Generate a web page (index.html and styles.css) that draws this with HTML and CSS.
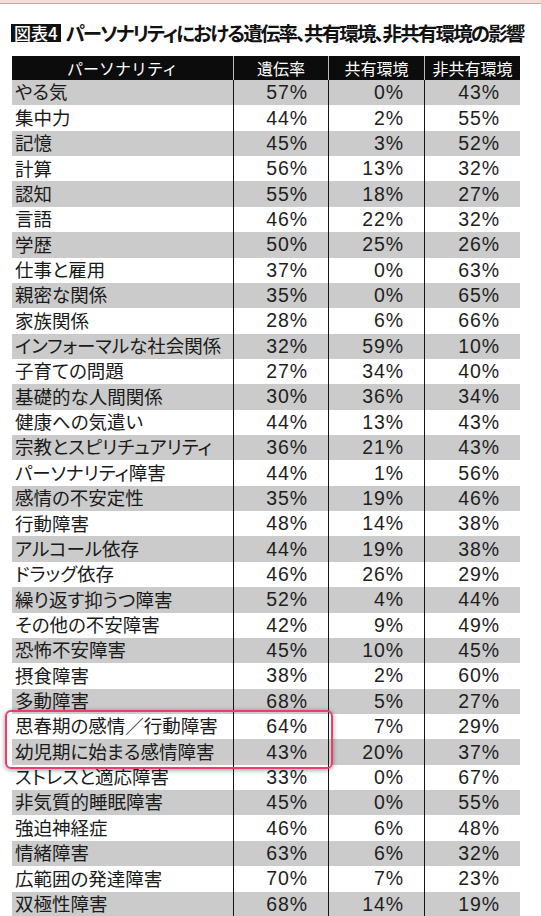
FILE: index.html
```html
<!DOCTYPE html>
<html lang="ja">
<head>
<meta charset="utf-8">
<title>図表4</title>
<link rel="stylesheet" href="styles.css">
</head>
<body>
<div class="topbar"></div>
<h1 class="title"><span class="badge">図表4</span><span class="title-text">パーソナリティにおける遺伝率、共有環境、非共有環境の影響</span></h1>
<div class="table">
  <div class="head">
    <div class="hc">パーソナリティ</div>
    <div class="hc">遺伝率</div>
    <div class="hc">共有環境</div>
    <div class="hc">非共有環境</div>
  </div>
  <div class="body">
    <div class="row"><div class="lab">やる気</div><div class="num">57%</div><div class="num">0%</div><div class="num">43%</div></div>
    <div class="row"><div class="lab">集中力</div><div class="num">44%</div><div class="num">2%</div><div class="num">55%</div></div>
    <div class="row"><div class="lab">記憶</div><div class="num">45%</div><div class="num">3%</div><div class="num">52%</div></div>
    <div class="row"><div class="lab">計算</div><div class="num">56%</div><div class="num">13%</div><div class="num">32%</div></div>
    <div class="row"><div class="lab">認知</div><div class="num">55%</div><div class="num">18%</div><div class="num">27%</div></div>
    <div class="row"><div class="lab">言語</div><div class="num">46%</div><div class="num">22%</div><div class="num">32%</div></div>
    <div class="row"><div class="lab">学歴</div><div class="num">50%</div><div class="num">25%</div><div class="num">26%</div></div>
    <div class="row"><div class="lab">仕事と雇用</div><div class="num">37%</div><div class="num">0%</div><div class="num">63%</div></div>
    <div class="row"><div class="lab">親密な関係</div><div class="num">35%</div><div class="num">0%</div><div class="num">65%</div></div>
    <div class="row"><div class="lab">家族関係</div><div class="num">28%</div><div class="num">6%</div><div class="num">66%</div></div>
    <div class="row"><div class="lab">インフォーマルな社会関係</div><div class="num">32%</div><div class="num">59%</div><div class="num">10%</div></div>
    <div class="row"><div class="lab">子育ての問題</div><div class="num">27%</div><div class="num">34%</div><div class="num">40%</div></div>
    <div class="row"><div class="lab">基礎的な人間関係</div><div class="num">30%</div><div class="num">36%</div><div class="num">34%</div></div>
    <div class="row"><div class="lab">健康への気遣い</div><div class="num">44%</div><div class="num">13%</div><div class="num">43%</div></div>
    <div class="row"><div class="lab">宗教とスピリチュアリティ</div><div class="num">36%</div><div class="num">21%</div><div class="num">43%</div></div>
    <div class="row"><div class="lab">パーソナリティ障害</div><div class="num">44%</div><div class="num">1%</div><div class="num">56%</div></div>
    <div class="row"><div class="lab">感情の不安定性</div><div class="num">35%</div><div class="num">19%</div><div class="num">46%</div></div>
    <div class="row"><div class="lab">行動障害</div><div class="num">48%</div><div class="num">14%</div><div class="num">38%</div></div>
    <div class="row"><div class="lab">アルコール依存</div><div class="num">44%</div><div class="num">19%</div><div class="num">38%</div></div>
    <div class="row"><div class="lab">ドラッグ依存</div><div class="num">46%</div><div class="num">26%</div><div class="num">29%</div></div>
    <div class="row"><div class="lab">繰り返す抑うつ障害</div><div class="num">52%</div><div class="num">4%</div><div class="num">44%</div></div>
    <div class="row"><div class="lab">その他の不安障害</div><div class="num">42%</div><div class="num">9%</div><div class="num">49%</div></div>
    <div class="row"><div class="lab">恐怖不安障害</div><div class="num">45%</div><div class="num">10%</div><div class="num">45%</div></div>
    <div class="row"><div class="lab">摂食障害</div><div class="num">38%</div><div class="num">2%</div><div class="num">60%</div></div>
    <div class="row"><div class="lab">多動障害</div><div class="num">68%</div><div class="num">5%</div><div class="num">27%</div></div>
    <div class="row"><div class="lab">思春期の感情／行動障害</div><div class="num">64%</div><div class="num">7%</div><div class="num">29%</div></div>
    <div class="row"><div class="lab">幼児期に始まる感情障害</div><div class="num">43%</div><div class="num">20%</div><div class="num">37%</div></div>
    <div class="row"><div class="lab">ストレスと適応障害</div><div class="num">33%</div><div class="num">0%</div><div class="num">67%</div></div>
    <div class="row"><div class="lab">非気質的睡眠障害</div><div class="num">45%</div><div class="num">0%</div><div class="num">55%</div></div>
    <div class="row"><div class="lab">強迫神経症</div><div class="num">46%</div><div class="num">6%</div><div class="num">48%</div></div>
    <div class="row"><div class="lab">情緒障害</div><div class="num">63%</div><div class="num">6%</div><div class="num">32%</div></div>
    <div class="row"><div class="lab">広範囲の発達障害</div><div class="num">70%</div><div class="num">7%</div><div class="num">23%</div></div>
    <div class="row"><div class="lab">双極性障害</div><div class="num">68%</div><div class="num">14%</div><div class="num">19%</div></div>
  </div>
  <div class="highlight"></div>
</div>
</body>
</html>
```
FILE: styles.css
```css
html, body {
  margin: 0;
  padding: 0;
  background: #ffffff;
}
body {
  width: 541px;
  height: 916px;
  overflow: hidden;
  font-family: "Noto Sans CJK JP", "Noto Sans", sans-serif;
  color: #1c1c1c;
}
.topbar {
  height: 3px;
  background: #f4dcd8;
  border-bottom: 1px solid #c4aaa6;
}
.title {
  margin: 18px 0 0 11px;
  height: 22px;
  display: flex;
  align-items: center;
  gap: 5px;
  font-weight: 700;
  line-height: 1;
  white-space: nowrap;
}
.badge {
  background: #111;
  color: #fff;
  font-size: 17px;
  font-weight: 500;
  height: 18px;
  line-height: 18px;
  padding: 0 3px;
  font-feature-settings: "palt";
}
.title-text {
  font-size: 19.5px;
  letter-spacing: -1.85px;
  font-feature-settings: "palt";
  color: #111;
}
.table {
  position: relative;
  margin: 12px 0 0 12px;
  width: 508px;
}
.head, .row {
  display: grid;
  grid-template-columns: 221px 95px 96px 96px;
}
.head {
  height: 24px;
  background: #0c0c0c;
  color: #fff;
}
.hc {
  font-size: 16px;
  line-height: 24px;
  text-align: center;
  white-space: nowrap;
}
.hc + .hc {
  border-left: 1px solid #bdbdbd;
}
.body {
  display: grid;
  grid-auto-rows: 25.36px;
  border-bottom: 1px solid #333;
}
.row:nth-child(odd) {
  background: #cbcbcb;
}
.lab {
  padding: 0 0 2px 3px;
  font-size: 18.5px;
  line-height: 1;
  font-feature-settings: "palt";
  display: flex;
  align-items: center;
  white-space: nowrap;
  color: #1a1a1a;
}
.num {
  border-left: 1px solid #151515;
  font-family: "Liberation Sans", Arial, sans-serif;
  font-size: 19.5px;
  letter-spacing: 0.9px;
  padding-right: 20px;
  display: flex;
  align-items: center;
  justify-content: flex-end;
  color: #1e1e1e;
}
.highlight {
  position: absolute;
  left: -7px;
  top: 654px;
  width: 324px;
  height: 55px;
  border: 2.5px solid #ec3d6e;
  border-radius: 6px;
  box-shadow: 0 1px 5px rgba(0, 0, 0, 0.4);
  pointer-events: none;
}
```
